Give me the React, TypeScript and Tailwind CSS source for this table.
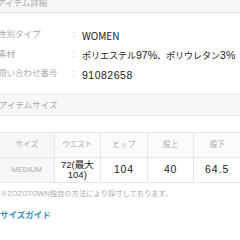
export default function App() {
    const rows = [
        { label: "性別タイプ", value: <span className="text-[10px]" style={{ fontFamily: '"Noto Sans CJK JP", sans-serif' }}>WOMEN</span> },
        {
            label: "素材",
            value: (
                <span className="text-[9px]">
                    ポリエステル<span className="text-[10.5px]">97%</span>、ポリウレタン<span className="text-[10.5px]">3%</span>
                </span>
            ),
        },
        { label: "問い合わせ番号", value: <span className="text-[10.5px] tracking-[0.5px]">91082658</span> },
    ]
    const heads = ["サイズ", "ウエスト", "ヒップ", "股上", "股下"]

    return (
        <div
            className="w-[240px] h-[240px] overflow-hidden bg-white"
            style={{ fontFamily: '"Liberation Sans", "Noto Sans CJK JP", sans-serif' }}
        >
            {/* ITEM DETAIL HEADER */}
            <div className="-mt-[6px] h-[19px] flex items-center bg-[#f7f7f7] border-b border-[#e6e6e6]">
                <span className="-ml-[3px] text-[8.5px] text-[#aaa]">アイテム詳細</span>
            </div>

            {/* Detail rows */}
            <div className="pt-[12px]">
                {rows.map((r) => (
                    <div key={r.label} className="flex items-center h-[19.5px]">
                        <span className="-ml-[2px] w-[75px] text-[8.5px] text-[#aaa]">{r.label}</span>
                        <span className="w-[9px] text-[9px] text-[#bbb]">:</span>
                        <span className="text-[#1a1a1a] whitespace-nowrap">{r.value}</span>
                    </div>
                ))}
            </div>

            {/* ITEM SIZE HEADER */}
            <div className="mt-[10.5px] h-[22px] flex items-center bg-[#f7f7f7] border-y border-[#e6e6e6]">
                <span className="-ml-[1px] text-[8.5px] text-[#aaa]">アイテムサイズ</span>
            </div>

            {/* Size table */}
            <table className="mt-[16px] w-[241px] border-collapse table-fixed">
                <thead>
                    <tr className="h-[25px] bg-[#fbfbfb]">
                        {heads.map((h, i) => (
                            <th
                                key={h}
                                className={`font-normal text-[7.5px] text-[#aaa] border border-[#e6e6e6] ${i === 0 ? "w-[54px] border-l-0 bg-[#f7f7f7]" : ""}`}
                            >
                                {h}
                            </th>
                        ))}
                    </tr>
                </thead>
                <tbody>
                    <tr className="h-[25px]">
                        <td className="bg-[#f7f7f7] text-center text-[7.5px] text-[#aaa] border border-l-0 border-[#e6e6e6]">MEDIUM</td>
                        <td className="text-center text-[9.5px] leading-[10px] text-[#1a1a1a] border border-[#e6e6e6]">
                            <div>72(最大</div>
                            <div>104)</div>
                        </td>
                        <td className="text-center text-[10.5px] tracking-[0.8px] text-[#1a1a1a] border border-[#e6e6e6]">104</td>
                        <td className="text-center text-[10.5px] tracking-[0.8px] text-[#1a1a1a] border border-[#e6e6e6]">40</td>
                        <td className="text-center text-[10.5px] tracking-[1px] text-[#1a1a1a] border border-[#e6e6e6]">64.5</td>
                    </tr>
                </tbody>
            </table>

            {/* Note */}
            <p className="mt-[6px] text-[7.3px] text-[#aaa] whitespace-nowrap">※ZOZOTOWN独自の方法により採寸しております。</p>

            {/* Size guide link */}
            <p className="mt-[9px] text-[8.5px] font-bold text-[#3b8fbf]">サイズガイド</p>
        </div>
    )
}
